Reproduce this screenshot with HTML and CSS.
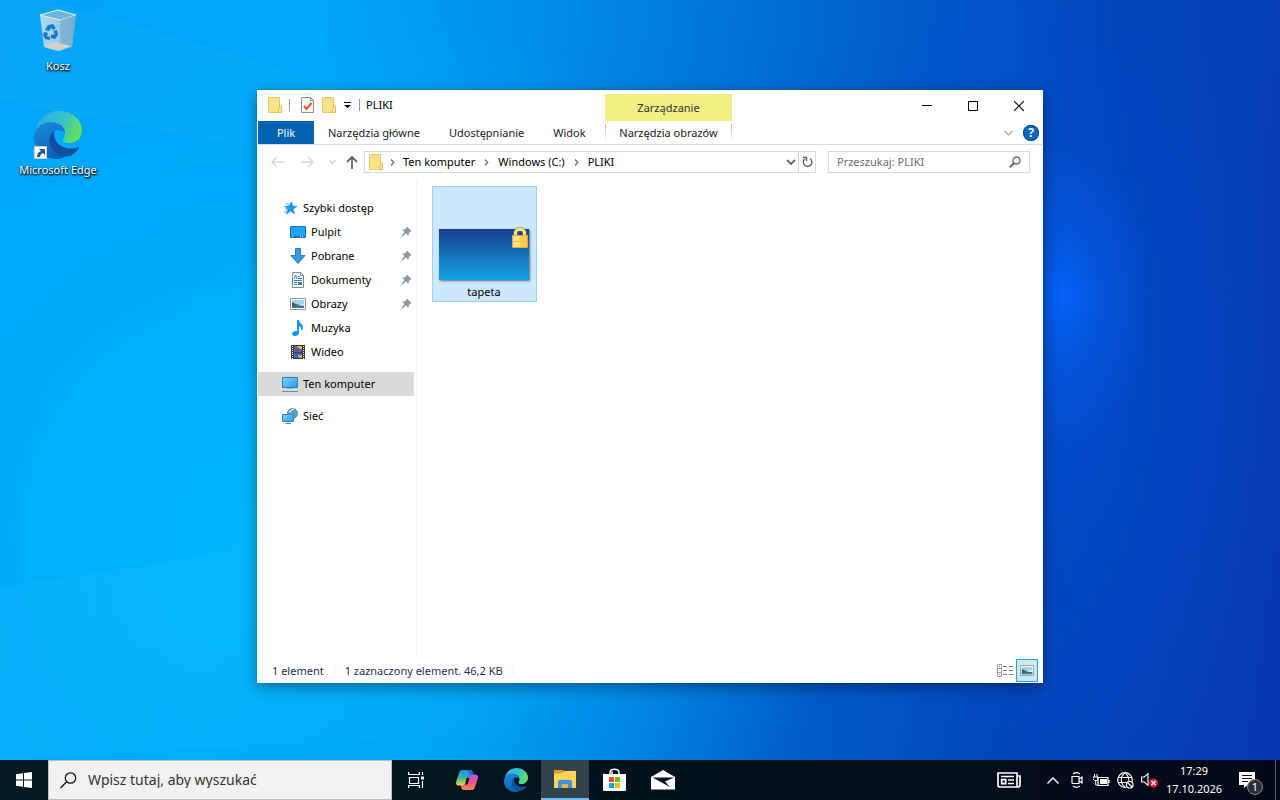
FILE: index.html
```html
<!DOCTYPE html>
<html lang="pl">
<head>
<meta charset="utf-8">
<title>PLIKI</title>
<link rel="stylesheet" href="styles.css">
</head>
<body>
<svg class="defs" aria-hidden="true">
  <defs>
    <linearGradient id="edgeGreen" x1="0" y1="0.3" x2="1" y2="0.6"><stop offset="0" stop-color="#2fa9e8"/><stop offset="0.5" stop-color="#35c1cf"/><stop offset="1" stop-color="#66e356"/></linearGradient>
    <linearGradient id="edgeBlue" x1="0" y1="0" x2="0.4" y2="1"><stop offset="0" stop-color="#1a8be0"/><stop offset="1" stop-color="#0a62b8"/></linearGradient>
    <linearGradient id="copA" x1="0" y1="0" x2="0" y2="1"><stop offset="0" stop-color="#1f8df0"/><stop offset="0.45" stop-color="#2bb5a8"/><stop offset="1" stop-color="#f5d02c"/></linearGradient>
    <linearGradient id="copB" x1="0" y1="0" x2="0" y2="1"><stop offset="0" stop-color="#a55cf0"/><stop offset="0.5" stop-color="#f0508c"/><stop offset="1" stop-color="#ff8a4c"/></linearGradient>
    <linearGradient id="screen" x1="0" y1="0" x2="1" y2="1"><stop offset="0" stop-color="#7fd4ff"/><stop offset="1" stop-color="#22a0ee"/></linearGradient>
    <linearGradient id="bin" x1="0" y1="0" x2="1" y2="0"><stop offset="0" stop-color="#b9dcf0"/><stop offset="0.6" stop-color="#a5cde4"/><stop offset="1" stop-color="#78b2d4"/></linearGradient>
    <symbol id="edge" viewBox="0 0 48 48">
      <path d="M2 21C3 8 13 0 25 0c13 0 23 9 23 19 0 8-6 13-12 13-5 0-7-1-7-3 0-2 2-3 2-7 0-6-6-10-13-10C9 12 3 17 2 21z" fill="url(#edgeGreen)"/>
      <path d="M0 27c0-9 7-16 17-16 8 0 14 5 14 11-1-2-4-3-6-3-6 0-9 6-7 12 2 8 10 13 18 11-4 4-8 6-14 6C10 48 0 38 0 27z" fill="url(#edgeBlue)"/>
      <path d="M20 20c-6 4-6 14 0 20 5 5 13 7 18 4 3-2 5-4 7-7 .4-1-.3-1.500-1-1-8 4-20 0-23-8-1-3-1-6-1-8z" fill="#124f9e"/>
    </symbol>
    <symbol id="folder" viewBox="0 0 14 16"><path d="M.5.500h11v15H.5z" fill="#ffe28a" stroke="#ecca66"/><path d="M11.500 7.500l2 1.500v6.500h-3v-3l1-1z" fill="#ffe9a5" stroke="#e2bd4f"/></symbol>
    <symbol id="picture" viewBox="0 0 16 12"><path d="M.5.500h15v11H.5z" fill="#fff" stroke="#8c98a0"/><path d="M2 2h12v4H2z" fill="#9fd3f7"/><path d="M2 4l4 2 8 1v3H2z" fill="#366b62"/><path d="M6 7l8-1v2z" fill="#d7ebf7"/><path d="M2 8.500h12V10H2z" fill="#387da8"/></symbol>
    <symbol id="pin" viewBox="0 0 12 12"><path d="M7 .5L11.500 5l-1.300.6L8.700 7.500 8.500 10 6 7.500 1 11.500.8 11 4.500 6 2 3.800l2.600-.3L6.500 1.800z" fill="#8c98a3"/></symbol>
    <symbol id="sep" viewBox="0 0 5 7"><path d="M1 .5l2.700 3L1 6.500" fill="none" stroke="#777" stroke-width="1.400"/></symbol>
    <linearGradient id="ray" x1="0" y1="0" x2="1" y2="0"><stop offset="0" stop-color="#fff" stop-opacity=".03"/><stop offset="0.6" stop-color="#fff" stop-opacity="0"/></linearGradient>
  </defs>
</svg>

<main class="desktop">
  <svg class="rays" viewBox="0 0 1280 760" preserveAspectRatio="none" aria-hidden="true">
    <path d="M50 0L1060 300 0 100V0z" fill="url(#ray)"/>
    <path d="M0 588L1060 420V700L0 760z" fill="url(#ray)"/>
  </svg>
  <nav class="shortcuts">
    <a class="shortcut" href="#kosz">
      <svg width="48" height="48" viewBox="0 0 48 48">
        <path d="M6 8l18-5 18 5-4 32-14 4-14-4z" fill="url(#bin)" opacity=".92"/>
        <path d="M6 8l18-5 18 5-16 5z" fill="#6db4dc" stroke="#e5f0f5"/>
        <path d="M26 13l16-5-4 32-12 4z" fill="#76acc9" opacity=".65"/>
        <path d="M11 39l10-4 16 4-12 5-14-4z" fill="#d2cfcc"/>
        <path d="M14 18l5-1 3 4-3 2-2-2-2 3-4-1zM19 24l4-1 1 5-3 4-4-1 0-3 4-1zM10 25l4 1-1 3 3 1v3l-5-1-2-4z" fill="#1678d0"/>
      </svg>
      <span>Kosz</span>
    </a>
    <a class="shortcut" href="#edge-app">
      <svg width="48" height="48" viewBox="0 0 48 48">
        <use href="#edge" width="48" height="48"/>
        <path d="M.5 35.500h12v12H.5z" fill="#fff" stroke="#d0d0d0"/>
        <path d="M5 38h6v6l-2-2c-2 1-3 2-3 4H3c0-3 1-5 4-6z" fill="#27529c"/>
      </svg>
      <span>Microsoft Edge</span>
    </a>
  </nav>

  <section class="window" aria-label="PLIKI">
    <header class="head">
      <div class="head-left">
        <div class="title-row">
          <svg width="14" height="16"><use href="#folder"/></svg>
          <i class="bar"></i>
          <button class="plain" aria-label="Właściwości"><svg width="13" height="16" viewBox="0 0 13 16"><path d="M.5.500h9l3 3v12H.5z" fill="#fafafa" stroke="#8a8f94"/><path d="M9.500.500v3h3" fill="none" stroke="#8a8f94"/><path d="M3 9l2.500 3L10.500 6" fill="none" stroke="#e8531c" stroke-width="2"/></svg></button>
          <button class="plain" aria-label="Nowy folder"><svg width="14" height="16"><use href="#folder"/></svg></button>
          <button class="plain" aria-label="Dostosuj"><svg width="7" height="6" viewBox="0 0 7 6"><path d="M0 0h7v1H0zM0 3h7L3.500 6z"/></svg></button>
          <i class="bar"></i>
          <h1>PLIKI</h1>
        </div>
        <div class="tabs">
          <button class="tab file">Plik</button>
          <button class="tab">Narzędzia główne</button>
          <button class="tab">Udostępnianie</button>
          <button class="tab">Widok</button>
        </div>
      </div>
      <div class="context">
        <div class="context-name">Zarządzanie</div>
        <button class="tab">Narzędzia obrazów</button>
      </div>
      <div class="head-right">
        <div class="controls">
          <button aria-label="Minimalizuj"><svg width="10" height="11"><path d="M0 5h10v1H0z"/></svg></button>
          <button aria-label="Maksymalizuj"><svg width="10" height="10"><path d="M.5.500h9v9h-9z" fill="none" stroke="#000"/></svg></button>
          <button aria-label="Zamknij"><svg width="10" height="10"><path d="M0 0l10 10M10 0L0 10" stroke="#000" stroke-width="1.100"/></svg></button>
        </div>
        <div class="ribbon-tools">
          <button class="plain" aria-label="Rozwiń wstążkę"><svg width="9" height="6" viewBox="0 0 9 6"><path d="M.5.800l4 4 4-4" fill="none" stroke="#a0a0a0" stroke-width="1.200"/></svg></button>
          <button class="help" aria-label="Pomoc">?</button>
        </div>
      </div>
    </header>

    <div class="address-row">
      <div class="history">
        <button class="plain" aria-label="Wstecz"><svg width="13" height="12" viewBox="0 0 13 12"><path d="M6 1L1 6l5 5M1 6h12" fill="none" stroke="#d8d8d8" stroke-width="1.500"/></svg></button>
        <button class="plain" aria-label="Dalej"><svg width="13" height="12" viewBox="0 0 13 12"><path d="M7 1l5 5-5 5M12 6H0" fill="none" stroke="#d8d8d8" stroke-width="1.500"/></svg></button>
        <button class="plain small" aria-label="Ostatnie lokalizacje"><svg width="7" height="5" viewBox="0 0 7 5"><path d="M.5.500l3 3 3-3" fill="none" stroke="#ccc" stroke-width="1.300"/></svg></button>
        <button class="plain small" aria-label="W górę"><svg width="12" height="13" viewBox="0 0 12 13"><path d="M1 6l5-5 5 5M6 1v12" fill="none" stroke="#666" stroke-width="1.800"/></svg></button>
      </div>
      <div class="address">
        <svg width="14" height="16"><use href="#folder"/></svg>
        <svg class="chev" width="5" height="7"><use href="#sep"/></svg>
        <a href="#komputer">Ten komputer</a>
        <svg class="chev" width="5" height="7"><use href="#sep"/></svg>
        <a href="#c">Windows (C:)</a>
        <svg class="chev" width="5" height="7"><use href="#sep"/></svg>
        <a href="#pliki">PLIKI</a>
        <button class="plain drop" aria-label="Poprzednie lokalizacje"><svg width="10" height="7" viewBox="0 0 10 7"><path d="M1 1l4 4 4-4" fill="none" stroke="#666" stroke-width="1.800"/></svg></button>
        <button class="plain refresh" aria-label="Odśwież"><svg width="11" height="12" viewBox="0 0 11 12"><path d="M8 2.500A4.300 4.300 0 1 1 2.600 3M1 1.500h3.500V5" fill="none" stroke="#666" stroke-width="1.500"/></svg></button>
      </div>
      <label class="search">
        <input type="text" placeholder="Przeszukaj: PLIKI" aria-label="Przeszukaj: PLIKI">
        <svg width="12" height="12" viewBox="0 0 12 12"><circle cx="7.500" cy="4.500" r="3.500" fill="none" stroke="#666" stroke-width="1.400"/><path d="M5 7L.7 11.300" stroke="#666" stroke-width="1.900"/></svg>
      </label>
    </div>

    <div class="body">
      <nav class="tree">
        <a class="row top" href="#szybki"><svg width="16" height="16" viewBox="0 0 16 16"><path d="M9.500 2l1 4 4.500.5-4 2.500 1.500 5-4-3-4 3 1.500-4.500-3-3 4-.5z" fill="#1e97ef" stroke="#1775c6" stroke-width=".6"/><path d="M4 4h3M2 6.500h3M3 9h3M2 12h3" stroke="#49aaf0"/></svg>Szybki dostęp</a>
        <a class="row" href="#pulpit"><svg width="16" height="16" viewBox="0 0 16 16"><path d="M.5 2.500h15v11H.5z" fill="#1da2ff" stroke="#1674c4"/><path d="M1 12h14v1H1z" fill="#1568b8"/><path d="M2 12h1v1H2zM10 12h1v1h-1zM12 12h1v1h-1z" fill="#d8efff"/></svg>Pulpit<svg class="pin" width="12" height="12"><use href="#pin"/></svg></a>
        <a class="row" href="#pobrane"><svg width="16" height="16" viewBox="0 0 16 16"><path d="M5.500.500h5v7h4.500L8 15.500 1 7.500h4.500z" fill="#3b96e4" stroke="#2779c7"/></svg>Pobrane<svg class="pin" width="12" height="12"><use href="#pin"/></svg></a>
        <a class="row" href="#dokumenty"><svg width="16" height="16" viewBox="0 0 16 16"><path d="M2.500.500h8l3 3v12h-11z" fill="#fff" stroke="#7f8b93"/><path d="M10.500.500v3h3" fill="none" stroke="#7f8b93"/><path d="M4 7l1.500-4L7 7" fill="none" stroke="#2386d1"/><path d="M8 4.500h2M8 6.500h4M4 8.500h8M4 10.500h3M4 12.500h3" stroke="#2386d1"/><path d="M8 10h4v3H8z" fill="#48829a"/></svg>Dokumenty<svg class="pin" width="12" height="12"><use href="#pin"/></svg></a>
        <a class="row" href="#obrazy"><svg width="16" height="12"><use href="#picture"/></svg>Obrazy<svg class="pin" width="12" height="12"><use href="#pin"/></svg></a>
        <a class="row" href="#muzyka"><svg width="16" height="16" viewBox="0 0 16 16"><path d="M7 0h2c0 3 4 4 4 7 0 2-1 3-2 4 .6-3 0-4-2-5v7c0 2-2 3-4 3s-3-1-3-2 1-3 5-3z" fill="#0d98f5"/></svg>Muzyka</a>
        <a class="row" href="#wideo"><svg width="16" height="16" viewBox="0 0 16 16"><path d="M1 1h14v14H1z" fill="#39383a"/><path d="M4 2h8v6H4z" fill="#4465c9"/><path d="M4 9h8v5H4z" fill="#3368c9"/><path d="M7 2h5v3H8z" fill="#dfba38"/><path d="M5 4h4v3H5z" fill="#a64445"/><path d="M8 11h4v3H9z" fill="#dfb23b"/><path d="M2.500 2v13M13.500 2v13" stroke="#fff" stroke-dasharray="1 1"/></svg>Wideo</a>
        <a class="row top current" href="#komputer"><svg width="16" height="16" viewBox="0 0 16 16"><path d="M.5 1.500h15v10H.5z" fill="url(#screen)" stroke="#3a7ba8"/><path d="M5 12.500h6" stroke="#8bb7d0"/><path d="M0 15.500h16" stroke="#6d8da2"/></svg>Ten komputer</a>
        <a class="row top" href="#siec"><svg width="16" height="16" viewBox="0 0 16 16"><circle cx="10.500" cy="5.500" r="5" fill="#5d9fbd" stroke="#4f87a5"/><path d="M7 4c2 0 2-3 5-3" stroke="#d6edf5" stroke-width="1.500" fill="none"/><path d="M.5 6.500h11v7H.5z" fill="url(#screen)" stroke="#3983b7"/><path d="M6 14v1M3 15.500h6" stroke="#5f8eac"/></svg>Sieć</a>
      </nav>
      <div class="files">
        <button class="file-item">
          <span class="thumb"><svg width="18" height="22" viewBox="0 0 18 22"><path d="M4.500 9V6c0-5 9-5 9 0v3" fill="none" stroke="#8d7428" stroke-width="4"/><path d="M4.500 9V6c0-5 9-5 9 0v3" fill="none" stroke="#fbe28d" stroke-width="3"/><path d="M1.500 8.500h15v12h-15z" fill="#fce08a" stroke="#e2a93b"/><path d="M9 9h7v11H9z" fill="#ffcf45"/><path d="M2 14.500h14" stroke="#f3bf49"/></svg></span>
          <span>tapeta</span>
        </button>
      </div>
    </div>

    <footer class="status">
      <span>1 element</span>
      <span class="selected">1 zaznaczony element. 46,2 KB</span>
      <div class="views">
        <button aria-label="Szczegóły"><svg width="17" height="13" viewBox="0 0 17 13"><path d="M.5.500h4v12h-4zM.5 4.500h4M.5 8.500h4" fill="#fff" stroke="#a0a0a0"/><path d="M6 2.500h4M12 2.500h4M6 6.500h4M12 6.500h4M6 10.500h4M12 10.500h4" stroke="#777"/><path d="M2 2h1v1H2z" fill="#38a"/><path d="M2 10h1v1H2z" fill="#c44"/></svg></button>
        <button class="on" aria-label="Duże ikony"><svg width="14" height="11" viewBox="0 0 16 12" preserveAspectRatio="none"><use href="#picture" width="16" height="12"/></svg></button>
      </div>
    </footer>
  </section>
</main>

<footer class="taskbar">
  <button class="task start" aria-label="Start"><svg width="16" height="16" viewBox="0 0 16 16"><path d="M0 2.300L7 1.300v6.200H0zM8 1.100L16 0v7.500H8zM0 8.500h7v6.200l-7-1zM8 8.500h8V16l-8-1.100z" fill="#fff"/></svg></button>
  <label class="task-search">
    <svg width="17" height="17" viewBox="0 0 17 17"><circle cx="10.500" cy="6" r="5.200" fill="none" stroke="#111" stroke-width="1.300"/><path d="M6.700 9.800L.5 16" stroke="#111" stroke-width="1.300"/></svg>
    <input type="text" placeholder="Wpisz tutaj, aby wyszukać" aria-label="Wpisz tutaj, aby wyszukać">
  </label>
  <div class="apps">
    <button class="task first" aria-label="Widok zadań"><svg width="17" height="16" viewBox="0 0 17 16"><path d="M.6 0v2.500h10.800V0M1.500 5.500h9v6h-9zM.6 16v-2.500h10.800V16M14.500 0v3M14.500 9v7" fill="none" stroke="#fff" stroke-width="1.200"/><path d="M13 4.500h3v3h-3z" fill="#fff"/></svg></button>
    <button class="task" aria-label="Copilot"><svg width="22" height="22" viewBox="0 0 22 22"><path d="M6 1h8c2 0 2.500 1.500 3 3l.5 2h-3c-2 0-2.500 1-3 3l-1.500 5c-.6 2-1.500 2.500-3 2.500H3c-3 0-3.500-2-2.500-5L3 4C3.600 2 4.500 1 6 1z" fill="url(#copA)"/><path d="M16 21H8c-2 0-2.500-1.500-3-3l-.5-2h3c2 0 2.500-1 3-3L12 8c.6-2 1.500-2.500 3-2.500h4c3 0 3.500 2 2.500 5L19 18c-.6 2-1.500 3-3 3z" fill="url(#copB)"/><path d="M6 1h8c2 0 2.500 1.500 3 3l.5 2h-3c-1-.2-1.500-.8-2-2C12 2 11 1 9.500 1z" fill="#1769d8"/><path d="M10.500 9h3l-2 6.500H8c1 0 1.300-1 1.600-2z" fill="#081624"/></svg></button>
    <button class="task" aria-label="Microsoft Edge"><svg width="24" height="24"><use href="#edge"/></svg></button>
    <button class="task active" aria-label="Eksplorator plików"><svg width="22" height="18" viewBox="0 0 22 18"><path d="M0 0h9l2 2H0z" fill="#d99a0c"/><path d="M0 2h9l2-1h11v17H0z" fill="#ffd45c"/><path d="M0 0h8l1.500 1.500L8 3.500H0z" fill="#dea11a"/><path d="M4 18v-6c0-1.500 1-2 2-2h10c1 0 2 .5 2 2v6h-4v-3.500H8V18z" fill="#3e93d9"/><path d="M8 14.500h6V18H8z" fill="#f3b83b"/></svg></button>
    <button class="task" aria-label="Microsoft Store"><svg width="23" height="24" viewBox="0 0 23 24"><path d="M7 7V4.500C7 0 16 0 16 4.500V7M9 7V3.500" fill="none" stroke="#fff" stroke-width="1.500"/><path d="M0 6h23v15.500c0 1-.5 1.500-1.500 1.500h-20C.5 23 0 22.500 0 21.500z" fill="#fff"/><path d="M6 9h5v5H6z" fill="#f05022"/><path d="M12 9h5v5h-5z" fill="#7fba00"/><path d="M6 15h5v5H6z" fill="#00a4ef"/><path d="M12 15h5v5h-5z" fill="#ffb901"/></svg></button>
    <button class="task" aria-label="Poczta"><svg width="24" height="20" viewBox="0 0 24 20"><path d="M12 0l12 7v12.500H0V7z" fill="#fff"/><path d="M1.500 7.500h21.500L14 11.500l5 5.500z" fill="#02131d"/></svg></button>
  </div>
  <div class="tray">
    <button class="task news" aria-label="Wiadomości"><svg width="24" height="16" viewBox="0 0 24 16"><path d="M1 1h19v14H3c-1.500 0-2-1-2-2zM20 4h3v9c0 1.500-1 2-3 2M4 4.500h13M11 8h6M11 11.500h6" fill="none" stroke="#fff" stroke-width="1.700"/><path d="M4.700 7.700h4v4h-4z" fill="none" stroke="#fff" stroke-width="1.700"/></svg></button>
    <button class="mini" aria-label="Pokaż ukryte ikony"><svg width="12" height="7" viewBox="0 0 12 7"><path d="M.5 6.500L6 1l5.500 5.500" fill="none" stroke="#fff" stroke-width="1.300"/></svg></button>
    <button class="mini" aria-label="Rozpocznij spotkanie"><svg width="12" height="16" viewBox="0 0 12 16"><path d="M1 4.500h7v7H2c-.7 0-1-.5-1-1zM8 7l3-2v6l-3-2M2 2c2-1.500 5-1.500 7 0M2 14c2 1.500 5 1.500 7 0" fill="none" stroke="#fff" stroke-width="1.200"/></svg></button>
    <button class="mini" aria-label="Bateria"><svg width="17" height="13" viewBox="0 0 17 13"><path d="M5 3.500h10v8H5zM16 6v3" fill="none" stroke="#fff" stroke-width="1.200"/><path d="M7 5h7v5H7z" fill="#fff"/><path d="M1.500 0v3M4 0v3M0 3h5v2L4 6.500H1.500L0 5zM2.700 6v5H5" fill="none" stroke="#fff"/></svg></button>
    <button class="mini" aria-label="Sieć"><svg width="17" height="17" viewBox="0 0 17 17"><circle cx="8" cy="8" r="7.300" fill="none" stroke="#fff" stroke-width="1.200"/><path d="M8 .7c-5 4-5 10 0 14.600M8 .7c3 2.300 3.800 5 3.700 8M1 5.500h14M1 10.500h8" fill="none" stroke="#fff" stroke-width="1.100"/><circle cx="12.700" cy="12.700" r="4.300" fill="#020b18"/><circle cx="12.700" cy="12.700" r="3.300" fill="none" stroke="#fff" stroke-width="1.200"/><path d="M10.500 10.500l4.500 4.500" stroke="#fff" stroke-width="1.200"/></svg></button>
    <button class="mini" aria-label="Głośność"><svg width="17" height="16" viewBox="0 0 17 16"><path d="M.6 5h2.700L7 1.700v11.600L3.300 10H.6z" fill="none" stroke="#fff" stroke-width="1.100"/><circle cx="12.500" cy="11" r="4.500" fill="#e52029"/><path d="M10.500 9l4 4M14.500 9l-4 4" stroke="#fff" stroke-width="1.300"/></svg></button>
    <button class="clock"><span>17:29</span><span>17.10.2026</span></button>
    <button class="notice" aria-label="Powiadomienia"><svg width="16" height="16" viewBox="0 0 16 16"><path d="M0 0h16v13H9l-4 3v-3H0z" fill="#fff"/><path d="M3 3.500h10M3 6.500h10M3 9.500h6" stroke="#02091b"/></svg><span class="badge">1</span></button>
    <button class="show-desktop" aria-label="Pokaż pulpit"></button>
  </div>
</footer>
</body>
</html>
```
FILE: styles.css
```css
* { box-sizing: border-box; }

body {
  margin: 0;
  height: 100vh;
  display: flex;
  flex-direction: column;
  overflow: hidden;
  font: 11px/16px "Segoe UI", "Noto Sans", "Open Sans", sans-serif;
  color: #000;
}

button, input { font: inherit; color: inherit; }
button { border: 0; padding: 0; background: none; display: flex; align-items: center; justify-content: center; }
input { border: 0; padding: 0; background: none; outline: 0; min-width: 0; flex: 1; }
a { color: inherit; text-decoration: none; }
svg { display: block; flex: none; }
.defs { position: absolute; width: 0; height: 0; }

.desktop {
  position: relative;
  flex: 1;
  min-height: 0;
  background:
    radial-gradient(ellipse 7% 20% at 83% 39%, #0664ffdd 0%, #0560f077 40%, #0560f000 100%),
    radial-gradient(ellipse 18% 60% at 83% 50%, #0058e060 0%, #0058e000 100%),
    radial-gradient(ellipse 45% 75% at 20% 70%, #00b8ff 0%, #00b8ff00 100%),
    linear-gradient(98deg, #00a2f8 0%, #00a4f8 22%, #008fea 39%, #0072d8 54%, #0057c8 68%, #0346bc 80%, #0538b2 100%);
}
.rays { position: absolute; width: 100%; height: 100%; }

.shortcuts { position: relative; display: flex; flex-direction: column; gap: 37px; width: 100px; margin-left: 8px; padding-top: 7px; }
.shortcut { display: flex; flex-direction: column; align-items: center; gap: 3px; color: #fff; white-space: nowrap; text-shadow: 1px 1px 2px #000, 0 1px 2px #000; }

.window {
  position: absolute;
  inset: 90px 237px 77px 257px;
  display: flex;
  flex-direction: column;
  padding: 0 1px;
  background: #fff;
  box-shadow: 0 4px 14px #0006, 0 0 1px #0004;
}

.head { display: flex; border-bottom: 1px solid #dadbdc; height: 55px; flex: none; }
.head-left { width: 347px; }
.title-row { display: flex; align-items: center; height: 30px; padding-left: 10px; }
.title-row h1 { margin: 0 0 0 6px; font-size: 11px; font-weight: 400; }
.title-row .plain { margin-right: 8px; }
.bar { width: 1px; height: 12px; margin: 0 11px 0 7px; background: #999; }
.plain + .bar { margin: 0; }
.tabs { display: flex; height: 23px; margin-top: 1px; }
.tabs .tab { margin-right: 1px; }
.tab { padding: 0 14px; color: #222; white-space: nowrap; }
.tabs .file { width: 56px; margin: 0; background: #0063b1; color: #fff; }
.context { width: 127px; padding-top: 4px; }
.context-name { height: 27px; line-height: 27px; text-align: center; background: #f2f085; color: #333; }
.context .tab {
  width: 100%;
  height: 23px;
  padding: 0;
  background:
    linear-gradient(#bbb, #fff) left / 1px 18px no-repeat,
    linear-gradient(#bbb, #fff) right / 1px 18px no-repeat;
}
.head-right { flex: 1; }
.controls { display: flex; justify-content: flex-end; height: 31px; }
.controls button { width: 46px; }
.ribbon-tools { display: flex; justify-content: flex-end; align-items: center; gap: 10px; height: 23px; padding-right: 3px; }
.help { width: 16px; height: 16px; border-radius: 50%; background: #0b66bd; color: #fff; font-size: 12px; font-weight: 700; box-shadow: 0 0 0 1px #0b4f95 inset; }

.address-row { display: flex; align-items: center; height: 34px; padding: 0 12px 0 4px; flex: none; }
.history { display: flex; width: 102px; }
.history .plain { width: 30px; }
.history .small { width: 20px; }
.address { flex: 1; display: flex; align-items: center; height: 22px; padding-left: 4px; border: 1px solid #d9d9d9; white-space: nowrap; overflow: hidden; }
.chev { margin: 0 9px; }
.address svg:first-child + .chev { margin: 0 8px 0 7px; }
.address .drop { margin-left: auto; width: 14px; }
.address .refresh { width: 17px; height: 20px; border-left: 1px solid #d9d9d9; }
.search { display: flex; align-items: center; width: 202px; height: 22px; margin-left: 12px; padding: 0 8px; border: 1px solid #d9d9d9; }
::placeholder { color: #6d6d6d; opacity: 1; }

.body { flex: 1; display: flex; min-height: 0; }
.tree { width: 159px; padding: 17px 2px 0 0; border-right: 1px solid #f3f3f3; }
.row { display: flex; align-items: center; gap: 5px; height: 24px; padding-left: 32px; }
.row.top { padding-left: 24px; }
.row .pin { margin: 0 2px 0 auto; }
.current { margin: 8px 0; background: #d9d9d9; }
.files { flex: 1; padding: 7px 15px; }
.file-item { flex-direction: column; justify-content: flex-end; width: 105px; height: 116px; padding: 0 1px 1px 0; gap: 4px; background: #cce8ff; border: 1px solid #99d1ff; }
.thumb { display: flex; justify-content: flex-end; width: 90px; height: 51px; background: linear-gradient(#173f8f, #14a4e4); box-shadow: 1px 1px 2px #0008; }
.thumb svg { margin-top: -2px; }

.status { display: flex; align-items: center; height: 25px; padding: 0 4px 0 14px; color: #1e3050; flex: none; }
.selected { margin-left: 10px; padding: 0 10px; border: solid #f0f0f0; border-width: 0 1px; line-height: 12px; }
.views { display: flex; margin-left: auto; }
.views button { width: 22px; height: 23px; }
.views .on { background: #cbe8f6; border: 1px solid #26a0da; }

.taskbar { display: flex; height: 40px; flex: none; background: linear-gradient(90deg, #011a22, #02121c 55%, #020818); color: #fff; }
.task { width: 48px; height: 40px; }
.task-search { display: flex; align-items: center; gap: 11px; flex: 0 1 344px; padding: 0 11px; background: #f2f2f2; border: 1px solid #bbb; font-size: 14px; color: #333; }
.task-search ::placeholder { color: #333; }
.apps { display: flex; gap: 1px; }
.apps .first { margin-right: 2px; }
.task.active { background: #34444f; border-bottom: 2px solid #76b9ed; }
.tray { display: flex; margin-left: auto; }
.news { margin-right: 8px; }
.mini { width: 24px; }
.clock { flex-direction: column; width: 66px; line-height: 18px; }
.notice { position: relative; width: 40px; margin-right: 8px; }
.badge { position: absolute; left: 20px; top: 19px; width: 16px; height: 16px; border: 1px solid #888; border-radius: 50%; background: #2b2f37; line-height: 14px; }
.show-desktop { width: 5px; border-left: 1px solid #59606c; }
```
